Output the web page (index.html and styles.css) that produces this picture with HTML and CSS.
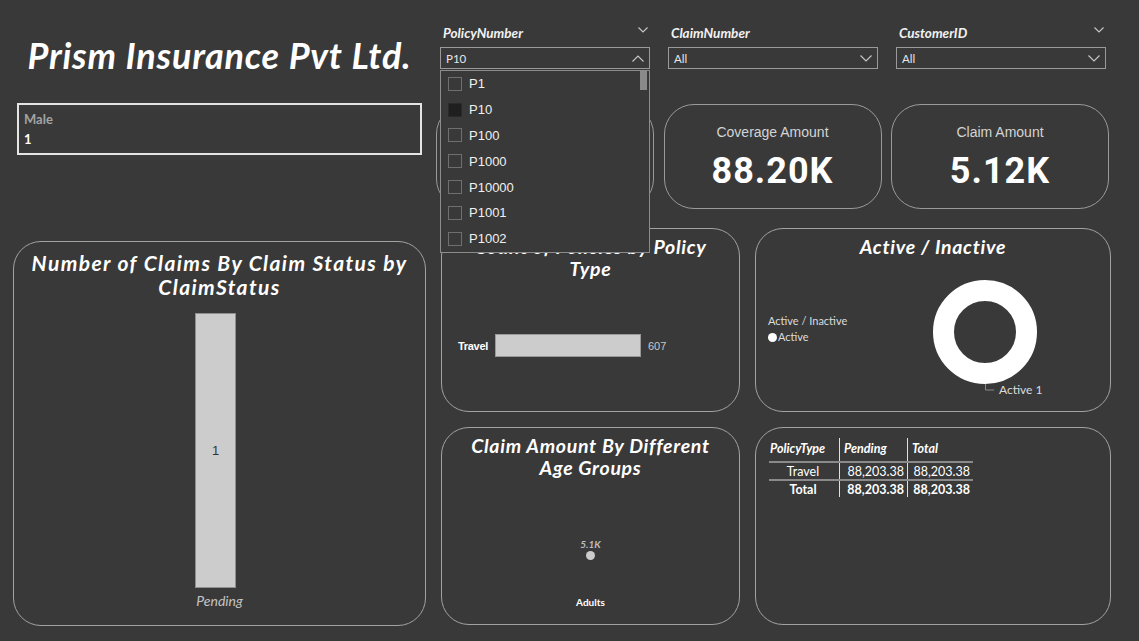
FILE: index.html
```html
<!DOCTYPE html>
<html lang="en">
  <head>
    <meta charset="UTF-8" />
    <meta name="viewport" content="width=device-width, initial-scale=1.0" />
    <title>Prism Insurance Dashboard</title>
    <link rel="stylesheet" href="styles.css">
  </head>
  <body>
    <div class="report">
      <div class="col-left">
        <h1 class="brand">Prism Insurance Pvt Ltd.</h1>
        <div class="gender-card">
          <div class="gender-label">Male</div>
          <div class="gender-value">1</div>
        </div>
        <section class="card claims-card">
          <h2 class="card-title">Number of Claims By Claim Status by<br>ClaimStatus</h2>
          <div class="column-plot">
            <div class="column-bar"><span>1</span></div>
            <div class="column-label">Pending</div>
          </div>
        </section>
      </div>

      <div class="col-right">
        <div class="slicers">
          <div class="slicer">
            <div class="slicer-head">
              <span>PolicyNumber</span>
              <svg class="chev" width="10" height="6" viewBox="0 0 10 6"><polyline points="0.5,0.5 5,5 9.5,0.5" /></svg>
            </div>
            <div class="slicer-box">
              <span>P10</span>
              <svg class="chev" width="12" height="7" viewBox="0 0 12 7"><polyline points="0.5,6.5 6,1 11.5,6.5" /></svg>
            </div>
            <div class="dropdown">
              <div class="scroll-thumb"></div>
              <div class="drop-item"><i class="box"></i>P1</div>
              <div class="drop-item"><i class="box checked"></i>P10</div>
              <div class="drop-item"><i class="box"></i>P100</div>
              <div class="drop-item"><i class="box"></i>P1000</div>
              <div class="drop-item"><i class="box"></i>P10000</div>
              <div class="drop-item"><i class="box"></i>P1001</div>
              <div class="drop-item"><i class="box"></i>P1002</div>
            </div>
          </div>
          <div class="slicer">
            <div class="slicer-head"><span>ClaimNumber</span></div>
            <div class="slicer-box">
              <span>All</span>
              <svg class="chev" width="12" height="7" viewBox="0 0 12 7"><polyline points="0.5,0.5 6,6 11.5,0.5" /></svg>
            </div>
          </div>
          <div class="slicer">
            <div class="slicer-head">
              <span>CustomerID</span>
              <svg class="chev" width="10" height="6" viewBox="0 0 10 6"><polyline points="0.5,0.5 5,5 9.5,0.5" /></svg>
            </div>
            <div class="slicer-box">
              <span>All</span>
              <svg class="chev" width="12" height="7" viewBox="0 0 12 7"><polyline points="0.5,0.5 6,6 11.5,0.5" /></svg>
            </div>
          </div>
        </div>

        <div class="kpis">
          <div class="kpi">
            <div class="kpi-label">Policy Count</div>
            <div class="kpi-value">1</div>
          </div>
          <div class="kpi">
            <div class="kpi-label">Coverage Amount</div>
            <div class="kpi-value">88.20K</div>
          </div>
          <div class="kpi">
            <div class="kpi-label">Claim Amount</div>
            <div class="kpi-value">5.12K</div>
          </div>
        </div>

        <div class="charts">
          <section class="card">
            <h2 class="card-title small">Count of Policies by Policy<br>Type</h2>
            <div class="hbar-row">
              <span class="hbar-label">Travel</span>
              <div class="hbar"></div>
              <span class="hbar-value">607</span>
            </div>
          </section>

          <section class="card">
            <h2 class="card-title small">Active / Inactive</h2>
            <div class="donut-body">
              <div class="legend">
                <div class="legend-title">Active / Inactive</div>
                <div class="legend-item"><i class="dot"></i>Active</div>
              </div>
              <svg class="donut" width="150" height="150" viewBox="0 0 150 150">
                <circle cx="54" cy="74" r="41.5" fill="none" stroke="#ffffff" stroke-width="21" />
                <polyline points="54.5,126 54.5,132 63,132" fill="none" stroke="#8a8a8a" stroke-width="1" />
                <text x="68" y="136">Active 1</text>
              </svg>
            </div>
          </section>

          <section class="card">
            <h2 class="card-title small">Claim Amount By Different<br>Age Groups</h2>
            <div class="dot-plot">
              <div class="dot-value">5.1K</div>
              <div class="dot-mark"></div>
              <div class="dot-label">Adults</div>
            </div>
          </section>

          <section class="card">
            <table class="matrix">
              <tr>
                <th>PolicyType</th>
                <th>Pending</th>
                <th>Total</th>
              </tr>
              <tr class="row-body">
                <td class="cat">Travel</td>
                <td class="num">88,203.38</td>
                <td class="num">88,203.38</td>
              </tr>
              <tr class="row-total">
                <td class="cat">Total</td>
                <td class="num">88,203.38</td>
                <td class="num">88,203.38</td>
              </tr>
            </table>
          </section>
        </div>
      </div>
    </div>
  </body>
</html>
```

FILE: styles.css
```css
body {
  margin: 0;
  background-color: #393939;
  color: #ffffff;
  font-family: Lato, "Open Sans", sans-serif;
  overflow: hidden;
}
.report {
  width: 1139px;
  height: 641px;
  display: flex;
}
.col-left {
  margin-left: 13px;
  width: 413px;
}
.col-right {
  margin-left: 10px;
  width: 675px;
}

/* title + gender card */
.brand {
  margin: 35px 0 0;
  height: 40px;
  line-height: 40px;
  text-align: center;
  font-size: 36px;
  font-weight: 700;
  font-style: italic;
  letter-spacing: 0.8px;
}
.gender-card {
  margin: 28px 4px 0;
  border: 2px solid #e4e4e4;
  padding: 0 5px;
  box-sizing: border-box;
  height: 52px;
}
.gender-label {
  margin-top: 6px;
  font-size: 13px;
  font-weight: 700;
  color: #a3a3a3;
  line-height: 16px;
}
.gender-value {
  margin-top: 4px;
  font-size: 13px;
  font-weight: 700;
  line-height: 16px;
}

/* cards */
.card {
  border: 1px solid #a2a2a2;
  border-radius: 28px;
  box-sizing: border-box;
}
.card-title {
  margin: 0;
  padding-top: 9px;
  text-align: center;
  font-size: 21px;
  line-height: 24px;
  font-weight: 700;
  font-style: italic;
  letter-spacing: 1.4px;
}
.card-title.small {
  padding-top: 7px;
  font-size: 19.5px;
  line-height: 22px;
  letter-spacing: 0.7px;
}
.claims-card {
  margin-top: 86px;
  height: 385px;
}
.column-plot {
  display: flex;
  flex-direction: column;
  align-items: center;
  margin-top: 14px;
}
.column-bar {
  width: 41px;
  height: 275px;
  margin-right: 8px;
  background: #cccccc;
  border: 1px solid #8f8f8f;
  box-sizing: border-box;
  display: flex;
  align-items: center;
  justify-content: center;
  color: #333333;
  font-family: "Liberation Sans", Arial, sans-serif;
  font-size: 13px;
}
.column-label {
  margin-top: 5px;
  font-size: 14px;
  line-height: 16px;
  font-style: italic;
  color: #c4c4c4;
}

/* slicers */
.slicers {
  display: flex;
  gap: 18px;
  padding-left: 4px;
  margin-top: 23px;
}
.slicer {
  position: relative;
  width: 210px;
}
.slicer-head {
  height: 20px;
  display: flex;
  align-items: center;
  justify-content: space-between;
  padding: 0 2px 0 3px;
  font-size: 13.5px;
  font-style: italic;
  font-weight: 700;
  color: #f2f2f2;
}
.slicer-head .chev {
  margin-top: -6px;
}
.chev polyline {
  fill: none;
  stroke: #c8c8c8;
  stroke-width: 1.1;
}
.slicer-box {
  margin-top: 4px;
  height: 22px;
  border: 1px solid #9a9a9a;
  box-sizing: border-box;
  display: flex;
  align-items: center;
  justify-content: space-between;
  padding: 0 5px 0 5px;
  font-size: 11.5px;
  color: #e6e6e6;
}
.dropdown {
  position: absolute;
  z-index: 5;
  left: 0;
  top: 47px;
  width: 210px;
  height: 183px;
  background: #393939;
  border: 1px solid #8c8c8c;
  box-sizing: border-box;
}
.scroll-thumb {
  position: absolute;
  right: 2px;
  top: 0;
  width: 7px;
  height: 19px;
  background: #8a8a8a;
}
.drop-item {
  height: 25.8px;
  display: flex;
  align-items: center;
  padding-left: 7px;
  font-family: "Liberation Sans", Arial, sans-serif;
  font-size: 13px;
  color: #f0f0f0;
}
.box {
  width: 14px;
  height: 14px;
  border: 1px solid #6f6f6f;
  box-sizing: border-box;
  margin-right: 7px;
}
.box.checked {
  background: #1f1f1f;
  border-color: #2a2a2a;
}

/* kpi cards */
.kpis {
  display: flex;
  gap: 9.5px;
  margin-top: 35px;
}
.kpi {
  width: 218px;
  height: 105px;
  border: 1px solid #9a9a9a;
  border-radius: 30px;
  box-sizing: border-box;
  text-align: center;
}
.kpi-label {
  margin-top: 19px;
  font-family: "Liberation Sans", Arial, sans-serif;
  font-size: 14px;
  line-height: 16px;
  color: #d4d4d4;
}
.kpi-value {
  margin-top: 11px;
  font-family: Roboto, sans-serif;
  font-size: 36px;
  line-height: 40px;
  font-weight: 700;
  letter-spacing: 1px;
}

/* chart grid */
.charts {
  display: grid;
  grid-template-columns: 299px 356px;
  grid-template-rows: 184px 198px;
  gap: 15px;
  margin-top: 19px;
  padding-left: 5px;
}
.hbar-row {
  display: flex;
  align-items: center;
  margin-top: 54px;
  font-family: "Liberation Sans", Arial, sans-serif;
  font-size: 11px;
}
.hbar-label {
  width: 46px;
  text-align: right;
  font-weight: 700;
  letter-spacing: -0.3px;
}
.hbar {
  width: 146px;
  height: 23px;
  margin-left: 7px;
  background: #cccccc;
  border: 1px solid #9a9a9a;
  box-sizing: border-box;
}
.hbar-value {
  margin-left: 7px;
  color: #c8c8c8;
}
.donut-body {
  display: flex;
}
.legend {
  width: 175px;
  padding-left: 12px;
  box-sizing: border-box;
  margin-top: 55px;
  font-size: 11px;
  line-height: 16px;
  color: #dcdcdc;
}
.legend-item {
  display: flex;
  align-items: center;
}
.dot {
  width: 9px;
  height: 9px;
  border-radius: 50%;
  background: #ffffff;
  margin-right: 1px;
}
.donut text {
  fill: #dcdcdc;
  font-family: Lato, sans-serif;
  font-size: 12px;
}
.dot-plot {
  display: flex;
  flex-direction: column;
  align-items: center;
}
.dot-value {
  margin-top: 59px;
  font-size: 10px;
  line-height: 12px;
  font-weight: 700;
  font-style: italic;
  color: #bdbdbd;
}
.dot-mark {
  margin-top: 1px;
  width: 9px;
  height: 9px;
  border-radius: 50%;
  background: #cccccc;
}
.dot-label {
  margin-top: 36px;
  font-size: 10px;
  line-height: 12px;
  font-weight: 700;
}

/* matrix */
.matrix {
  margin: 10px 0 0 13px;
  border-collapse: collapse;
  font-size: 12.5px;
  line-height: 15px;
}
.matrix th {
  text-align: left;
  font-style: italic;
  font-weight: 700;
  padding: 3px 4px 5px;
  border-left: 1px solid #e0e0e0;
  border-bottom: 2px solid #8a8a8a;
}
.matrix th:first-child,
.matrix td:first-child {
  border-left: none;
  padding-left: 1px;
}
.matrix th:first-child { width: 65px; }
.matrix th:nth-child(2) { width: 59px; }
.matrix th:nth-child(3) { width: 57px; }
.matrix td {
  padding: 1px 3px 0 4px;
  border-left: 1px solid #e0e0e0;
}
.matrix .row-body td {
  border-bottom: 2px solid #8a8a8a;
}
.matrix .cat {
  text-align: center;
}
.matrix .num {
  text-align: right;
}
.matrix .row-total td {
  font-weight: 700;
}
```
